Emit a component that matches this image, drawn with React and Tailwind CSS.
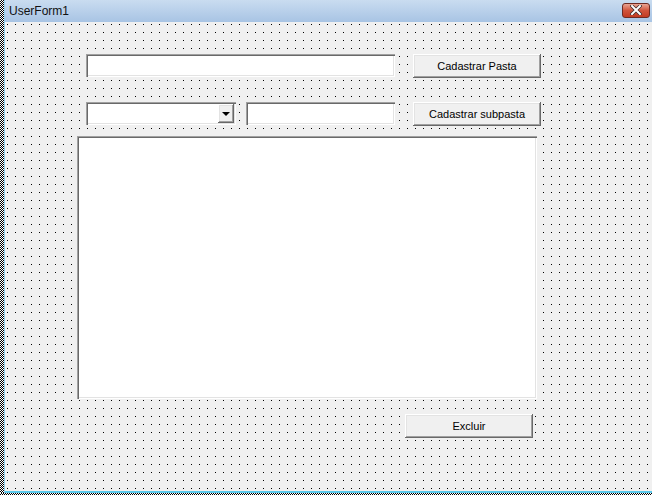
const sunken =
  'bg-white shadow-[inset_1px_1px_#a0a0a0,inset_2px_2px_#696969,inset_-1px_-1px_#fff,inset_-2px_-2px_#e3e3e3]';
const raised =
  'bg-[#f0f0f0] shadow-[inset_-1px_-1px_#696969,inset_1px_1px_#fff,inset_-2px_-2px_#a0a0a0,inset_2px_2px_#e3e3e3]';

const FormButton = ({ label, className }) => (
  <button
    className={`h-[24px] w-[128px] shrink-0 ${raised} text-[11px] text-black ${className || ''}`}
  >
    {label}
  </button>
);

const ComboBox = () => (
  <div className={`h-[23px] w-[150px] shrink-0 ${sunken} flex justify-end p-[2px]`}>
    <div className={`w-[16px] h-full ${raised} flex items-center justify-center`}>
      <div className="w-0 h-0 border-l-[4px] border-r-[4px] border-t-[4px] border-l-transparent border-r-transparent border-t-black" />
    </div>
  </div>
);

const App = () => {
  return (
    <div className="w-[652px] h-[495px] flex flex-col overflow-hidden bg-white font-['Liberation_Sans',Arial,sans-serif]">
      <div className="flex flex-1 min-h-0">
        {/* checker strip from the desktop edge */}
        <div className="w-[4px] shrink-0 bg-[image:repeating-conic-gradient(#000_0_25%,#fff_0_50%)] bg-[size:2px_2px]" />
        <div className="flex-1 flex flex-col border-l border-l-[#8fd0ec]">
          {/* title bar */}
          <div className="h-[22px] shrink-0 flex items-center justify-between pl-[4px] pr-[2px] bg-gradient-to-b from-[#c9dcf0] to-[#a8c4e4]">
            <span className="text-[12px] text-[#111] leading-none">UserForm1</span>
            <div className="w-[28px] h-[15px] mb-[2px] rounded-[3px] border border-[#6e2a22] bg-gradient-to-b from-[#e8a493] via-[#d0533b] to-[#c23a20] flex items-center justify-center">
              <svg width="12" height="10" viewBox="0 0 12 10">
                <path d="M2 1 L10 9 M10 1 L2 9" stroke="#3a2a2a" strokeWidth="3.4" strokeLinecap="square" />
                <path d="M2 1 L10 9 M10 1 L2 9" stroke="#fff" strokeWidth="2" strokeLinecap="square" />
              </svg>
            </div>
          </div>
          {/* form body */}
          <div className="flex-1 bg-[#f0f0f0] bg-[image:conic-gradient(from_270deg_at_1px_1px,#000_25%,transparent_0)] bg-[size:8px_8px] bg-[position:2px_2px] flex flex-col">
            <div className="flex mt-[32px] ml-[81px]">
              <div className={`h-[23px] w-[309px] ${sunken}`} />
              <FormButton label="Cadastrar Pasta" className="ml-[18px]" />
            </div>
            <div className="flex mt-[24px] ml-[81px]">
              <ComboBox />
              <div className={`h-[23px] w-[149px] ml-[10px] ${sunken}`} />
              <FormButton label="Cadastrar subpasta" className="ml-[18px]" />
            </div>
            <div className={`mt-[10px] ml-[72px] w-[460px] h-[263px] ${sunken}`} />
            <FormButton label="Excluir" className="mt-[15px] ml-[400px]" />
          </div>
          <div className="h-[2px] shrink-0 bg-[#5cc8ea]" />
        </div>
      </div>
      <div className="h-[2px] shrink-0 bg-[image:repeating-conic-gradient(#000_0_25%,#fff_0_50%)] bg-[size:2px_2px]" />
    </div>
  );
};

export default App;
